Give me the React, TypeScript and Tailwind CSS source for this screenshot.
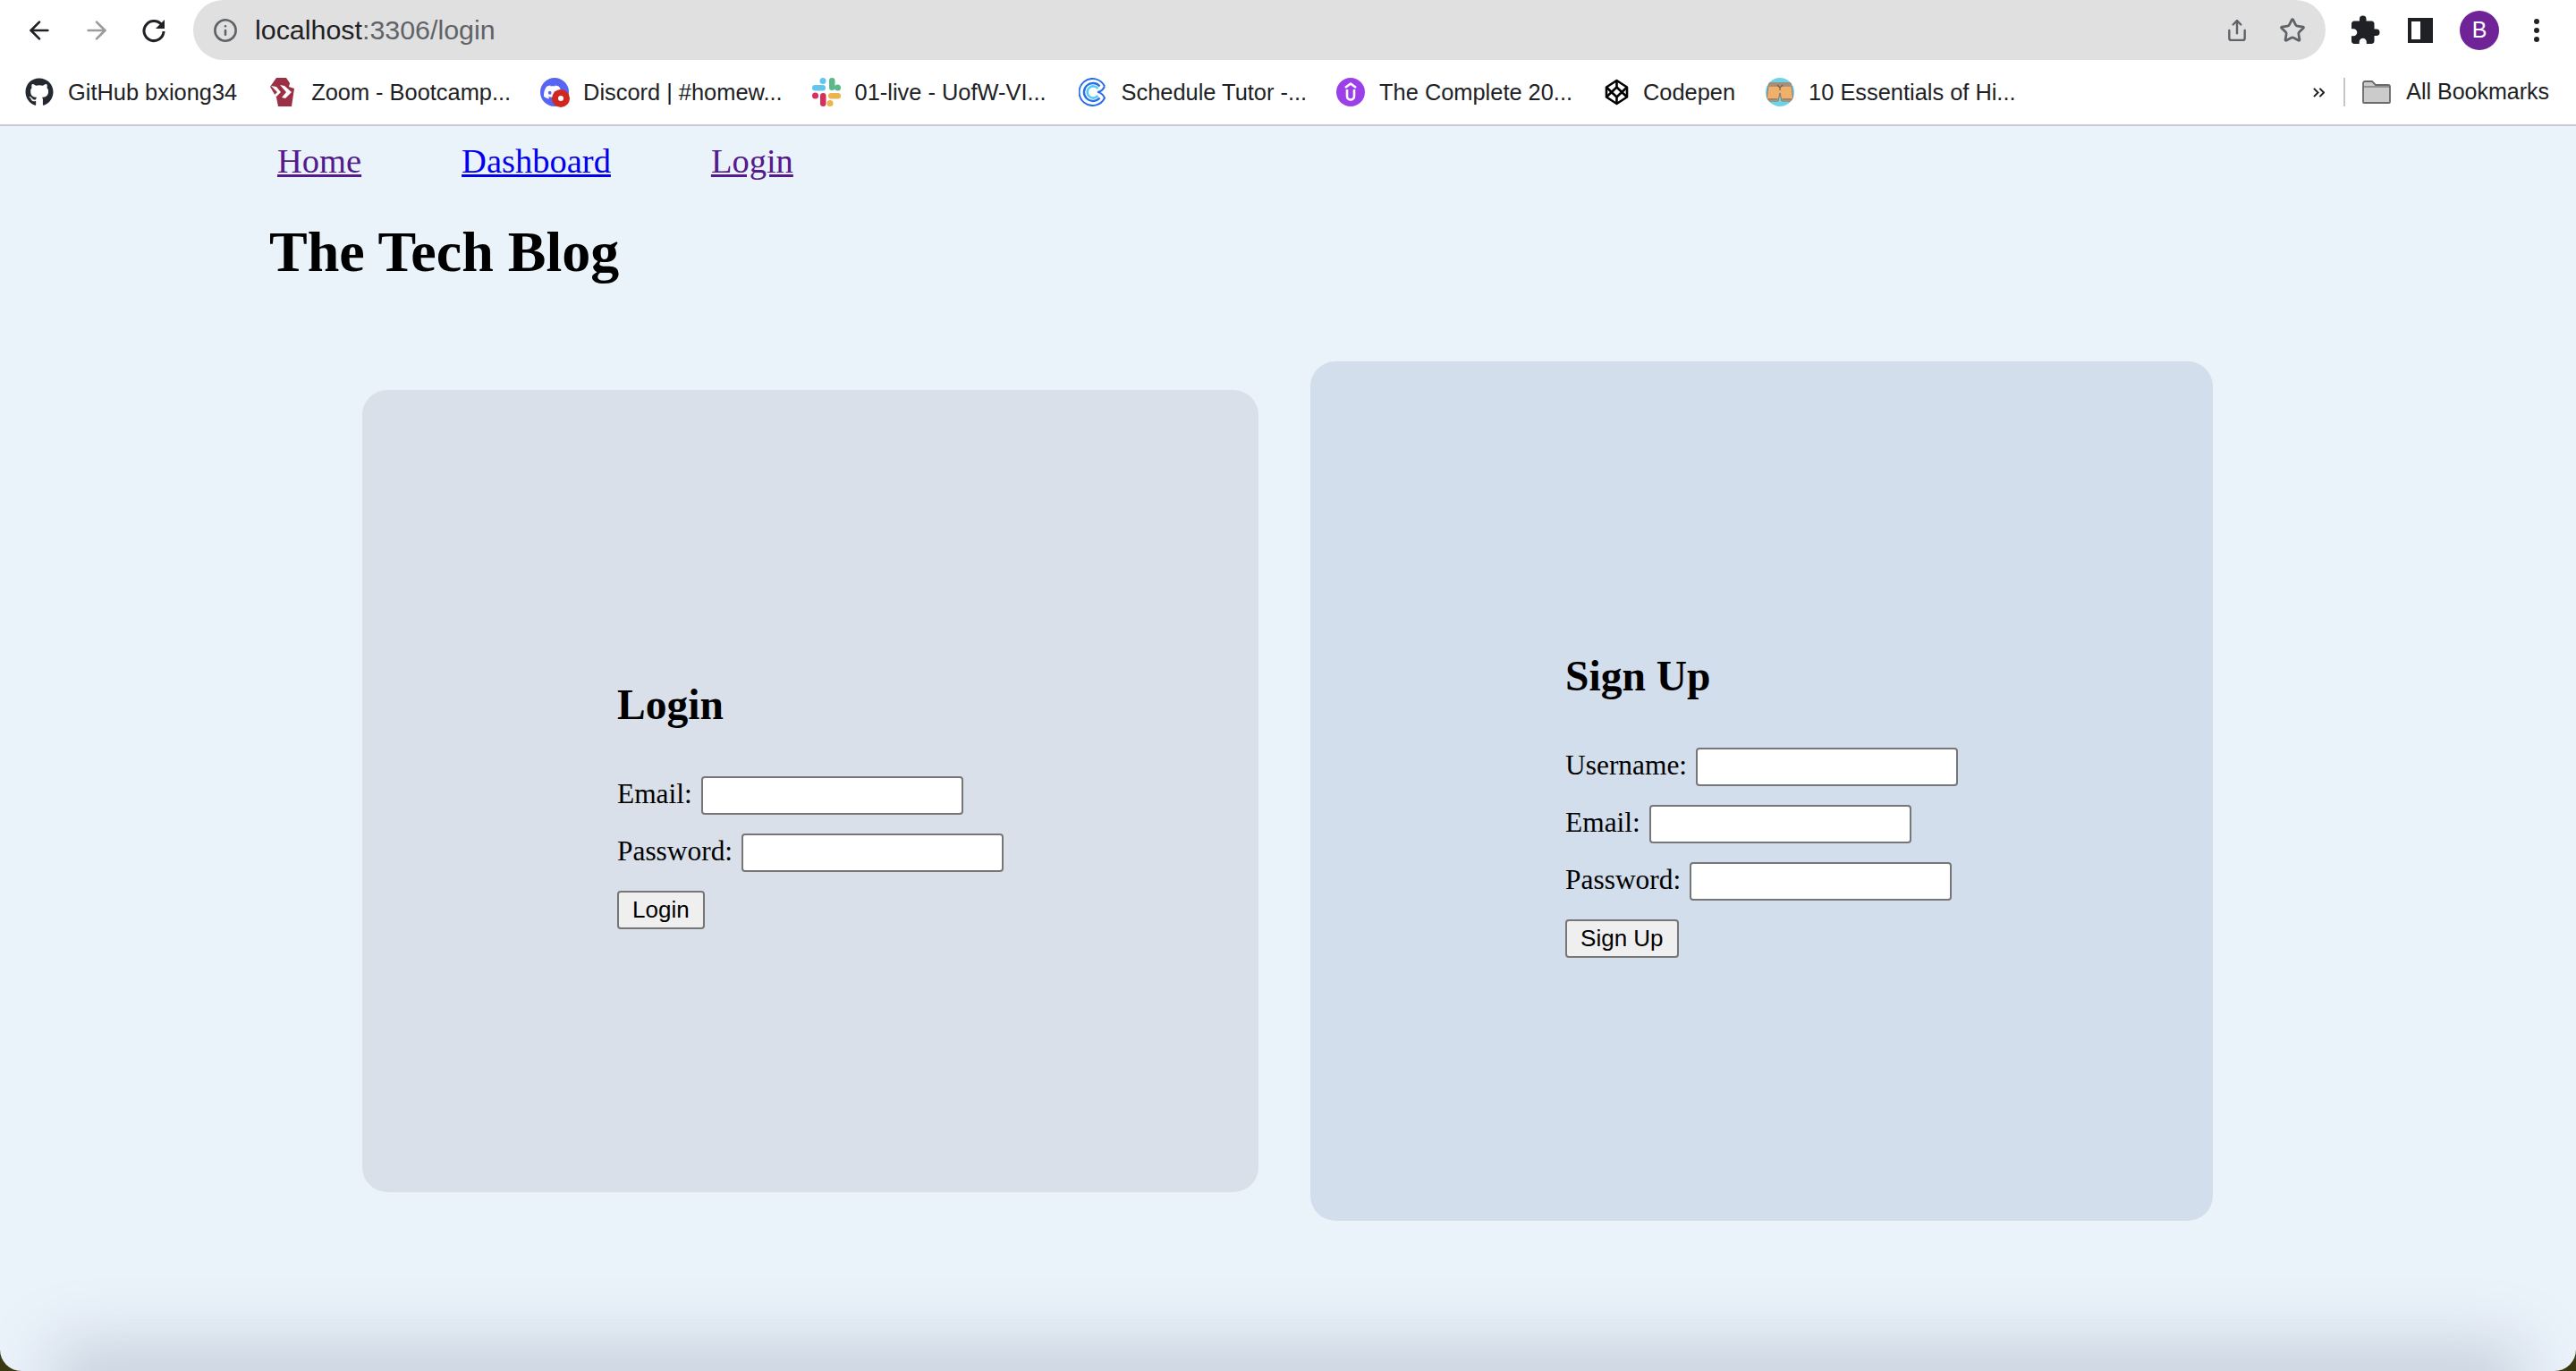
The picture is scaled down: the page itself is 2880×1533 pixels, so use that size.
import { ArrowLeft, ArrowRight, Info, Share, Star } from 'lucide-react';
import { FaGithub } from 'react-icons/fa';
import { MdExtension } from 'react-icons/md';
import { SiDiscord } from 'react-icons/si';

const ZoomIcon = () => (
  <svg viewBox="0 0 27 32" className="w-[27px] h-[32px]">
    <path d="M7 0h11l4 6-1 4 6 2-3 20H9L7 22 0 10z" fill="#9b2f44" />
    <path d="M1 9l6 1 5 6-5 5-3-1 4-4zM11 8l5 1 8 7-7 7-4-1 5-6z" fill="#fff" />
  </svg>
);

const DiscordIcon = () => (
  <div className="relative w-8 h-8 rounded-full bg-[#5865f2] flex items-center justify-center">
    <SiDiscord className="w-5 h-5 text-white -ml-1" />
    <div className="absolute -right-[1px] -bottom-[1px] w-5 h-5 rounded-full bg-[#d0281e] flex items-center justify-center">
      <div className="w-1.5 h-1.5 rounded-full bg-white" />
    </div>
  </div>
);

const SlackIcon = () => (
  <svg viewBox="0 0 32 32" className="w-8 h-8">
    <rect x="19" y="0" width="6.5" height="14" rx="3.2" fill="#5cb88a" />
    <circle cx="28.5" cy="11" r="3.5" fill="#5cb88a" />
    <rect x="0" y="8" width="15" height="6.5" rx="3.2" fill="#62c6ec" />
    <circle cx="12" cy="3.5" r="3.5" fill="#62c6ec" />
    <rect x="18" y="17" width="14" height="6.5" rx="3.2" fill="#ecb44a" />
    <circle cx="20" cy="28.5" r="3.5" fill="#ecb44a" />
    <rect x="9" y="17" width="6.5" height="15" rx="3.2" fill="#d5305c" />
    <circle cx="3.5" cy="20" r="3.5" fill="#d5305c" />
  </svg>
);

const CalendlyIcon = () => (
  <svg viewBox="0 0 32 32" className="w-8 h-8" fill="none">
    <path d="M29 9.5A15 15 0 1 0 29 22.5C27 18 25 16.5 21 16" stroke="#2a6fe8" strokeWidth="2" />
    <path d="M29 9.5C27 14 25 15.5 21 16" stroke="#2a6fe8" strokeWidth="2" />
    <path d="M23.5 9.5A10 10 0 1 0 23.5 22.5" stroke="#2a6fe8" strokeWidth="2.4" />
    <path d="M21.5 12A6.6 6.6 0 1 0 21.5 20" stroke="#55cdf2" strokeWidth="2.6" />
  </svg>
);

const ClickupIcon = () => (
  <div className="w-8 h-8 rounded-full bg-[#9b3fe8] flex items-center justify-center">
    <svg viewBox="0 0 32 32" className="w-8 h-8" fill="none" stroke="#fff" strokeWidth="2.6" strokeLinejoin="round">
      <path d="M10 11l6-4.5 6 4.5" />
      <path d="M12 13v7.5a4 4 0 0 0 8 0V13" />
    </svg>
  </div>
);

const CodepenIcon = () => (
  <svg viewBox="0 0 27 32" className="w-[27px] h-[32px]" fill="none" stroke="#000" strokeWidth="2.6" strokeLinejoin="round">
    <path d="M13.5 3L25 10.5v11L13.5 29 2 21.5v-11z" />
    <path d="M13.5 3v7.5M13.5 21.5V29M2 10.5l11.5 11 11.5-11M2 21.5l11.5-11 11.5 11" />
  </svg>
);

const ShortsIcon = () => (
  <div className="w-8 h-8 rounded-full bg-[#6fd3e8] overflow-hidden">
    <svg viewBox="0 0 32 32" className="w-8 h-8">
      <path d="M3 9h26l2 17H18l-2-9-2 9H1z" fill="#f0b06c" stroke="#80786e" strokeWidth="1" />
      <rect x="3" y="5" width="26" height="4.5" fill="#a58f78" />
      <path d="M13 8l3 3 3-3M16 11v3" fill="none" stroke="#6d5f52" strokeWidth="1.2" />
      <path d="M1 24h12.5M18.5 24H31" stroke="#80786e" strokeWidth="1.4" />
    </svg>
  </div>
);

const bookmarks = [
  { label: 'GitHub bxiong34', icon: <FaGithub className="w-8 h-8 text-[#24292f]" />, box: 'w-[32px]', gap: 'mr-[37px]' },
  { label: 'Zoom - Bootcamp...', icon: <ZoomIcon />, box: 'w-[30px] justify-start', gap: 'mr-[33px]' },
  { label: 'Discord | #homew...', icon: <DiscordIcon />, box: 'w-[32px]', gap: 'mr-[33px]' },
  { label: '01-live - UofW-VI...', icon: <SlackIcon />, box: 'w-[32px]', gap: 'mr-[36px]' },
  { label: 'Schedule Tutor -...', icon: <CalendlyIcon />, box: 'w-[32px]', gap: 'mr-[33px]' },
  { label: 'The Complete 20...', icon: <ClickupIcon />, box: 'w-[32px]', gap: 'mr-[36px]' },
  { label: 'Codepen', icon: <CodepenIcon />, box: 'w-[27px]', gap: 'mr-[34px]' },
  { label: '10 Essentials of Hi...', icon: <ShortsIcon />, box: 'w-[32px]', gap: 'mr-0' },
];

const Field = ({ label }: { label: string }) => (
  <label className="flex items-center gap-[10px] h-[43px] leading-[35px]">
    <span className="pb-[4px]">{label}</span>
    <input type="text" className="w-[293px] h-[43px] bg-white border-2 border-[#767676] rounded-[4px]" />
  </label>
);

const Card = ({ title, fields, button, tone }: { title: string; fields: string[]; button: string; tone: string }) => (
  <div className={`${tone} rounded-[28px] px-[285px] pt-[326px] pb-[294px] flex flex-col items-start whitespace-nowrap`}>
    <h2 className="text-[47.5px] font-bold leading-[53px] mb-[53px]">{title}</h2>
    <div className="flex flex-col gap-[21px] items-start">
      {fields.map(f => <Field key={f} label={f} />)}
      <button className="h-[43px] px-[15px] bg-[#efefef] border-2 border-[#767676] rounded-[4px] text-[26px] text-black font-['Liberation_Sans',Arial,sans-serif]">{button}</button>
    </div>
  </div>
);

export default function App() {
  return (
    <div className="relative w-full h-screen overflow-hidden bg-[#3a3a12] font-['Liberation_Serif','Times_New_Roman',serif] text-black">
      <div className="relative h-full overflow-hidden rounded-b-[24px] bg-[#eaf2fa]">
        {/* browser chrome */}
        <div className="bg-white border-b-2 border-[#c8ccd0] font-['Liberation_Sans',Arial,sans-serif]">
          <div className="h-[67px] flex items-center">
            <div className="w-[216px] shrink-0 flex items-center pl-[28px] gap-[32px]">
              <ArrowLeft className="w-8 h-8 text-[#202124]" strokeWidth={2} />
              <ArrowRight className="w-8 h-8 text-[#9a9b9d]" strokeWidth={2} />
              <svg viewBox="0 0 32 32" className="w-8 h-8" fill="none">
                <path d="M25.5 11A11 11 0 1 0 27 17" stroke="#202124" strokeWidth="3" />
                <path d="M28 4v10H18z" fill="#202124" />
              </svg>
            </div>
            <div className="w-[2384px] h-[67px] shrink-0 rounded-full bg-[#e0e0e0] flex items-center pl-[22px] pr-[22px]">
              <Info className="w-7 h-7 text-[#5f6368] mr-[19px]" strokeWidth={2.2} />
              <span className="text-[30.4px] text-[#5f6368]"><span className="text-[#202124]">localhost</span>:3306/login</span>
              <Share className="w-[26px] h-[28px] ml-auto mr-[34px] text-[#5f6368]" strokeWidth={2.2} />
              <Star className="w-[30px] h-[30px] text-[#5f6368]" strokeWidth={2.2} />
            </div>
            <div className="flex items-center pl-[26px]">
              <MdExtension className="w-[36px] h-[36px] text-[#202124]" />
              <div className="ml-[30px] w-[28px] h-[28px] border-[4px] border-[#202124] flex justify-end">
                <div className="w-[10px] h-full bg-[#202124]" />
              </div>
              <div className="ml-[30px] w-[44px] h-[44px] rounded-full bg-[#6f2396] text-white text-[25px] flex items-center justify-center">B</div>
              <svg viewBox="0 0 8 28" className="ml-[38px] w-[8px] h-[28px]" fill="#202124">
                <circle cx="4" cy="4" r="3" />
                <circle cx="4" cy="14" r="3" />
                <circle cx="4" cy="24" r="3" />
              </svg>
            </div>
          </div>
          <div className="h-[72px] flex items-center pl-[28px] text-[25.4px] text-[#202124] whitespace-nowrap">
            {bookmarks.map(b => (
              <div key={b.label} className={`flex items-center gap-[16px] ${b.gap}`}>
                <div className={`${b.box} h-[32px] flex items-center justify-center`}>{b.icon}</div>
                <span>{b.label}</span>
              </div>
            ))}
            <div className="ml-auto flex items-center pr-[30px]">
              <svg viewBox="0 0 14 14" className="w-[13px] h-[13px]" fill="none" stroke="#202124" strokeWidth="2.2">
                <path d="M1 2l5 5-5 5M8 2l5 5-5 5" />
              </svg>
              <div className="ml-[21px] w-[2px] h-[32px] bg-[#c4c6c8]" />
              <svg viewBox="0 0 32 26" className="ml-[19px] w-[32px] h-[26px]">
                <path d="M1 3a2 2 0 0 1 2-2h8l4 4h14a2 2 0 0 1 2 2v17a1 1 0 0 1-1 1H2a1 1 0 0 1-1-1z" fill="#cbcbcb" stroke="#6a6a6a" strokeWidth="1.8" />
                <path d="M1.5 7h29" stroke="#6a6a6a" strokeWidth="1.2" />
              </svg>
              <span className="ml-[17px] text-[25px]">All Bookmarks</span>
            </div>
          </div>
        </div>

        {/* page */}
        <nav className="flex gap-[112px] pl-[310px] pt-[17px] text-[38.5px] leading-[45px]">
          <a href="#home" className="underline text-[#551a8b]">Home</a>
          <a href="#dashboard" className="underline text-[#0000ee]">Dashboard</a>
          <a href="#login" className="underline text-[#551a8b]">Login</a>
        </nav>
        <h1 className="pl-[301px] mt-[42px] text-[64px] font-bold leading-[73px]">The Tech Blog</h1>
        <div className="flex items-center gap-[58px] pl-[405px] mt-[86px] text-[31.4px]">
          <Card title="Login" fields={['Email:', 'Password:']} button="Login" tone="bg-[#d9e0ea]" />
          <Card title="Sign Up" fields={['Username:', 'Email:', 'Password:']} button="Sign Up" tone="bg-[#d3deec]" />
        </div>

        {/* window shadow along the bottom edge */}
        <div className="absolute left-[90px] right-[90px] -bottom-[30px] h-[30px] shadow-[0_0_70px_30px_rgba(130,140,160,0.33)]" />
      </div>
    </div>
  );
}
